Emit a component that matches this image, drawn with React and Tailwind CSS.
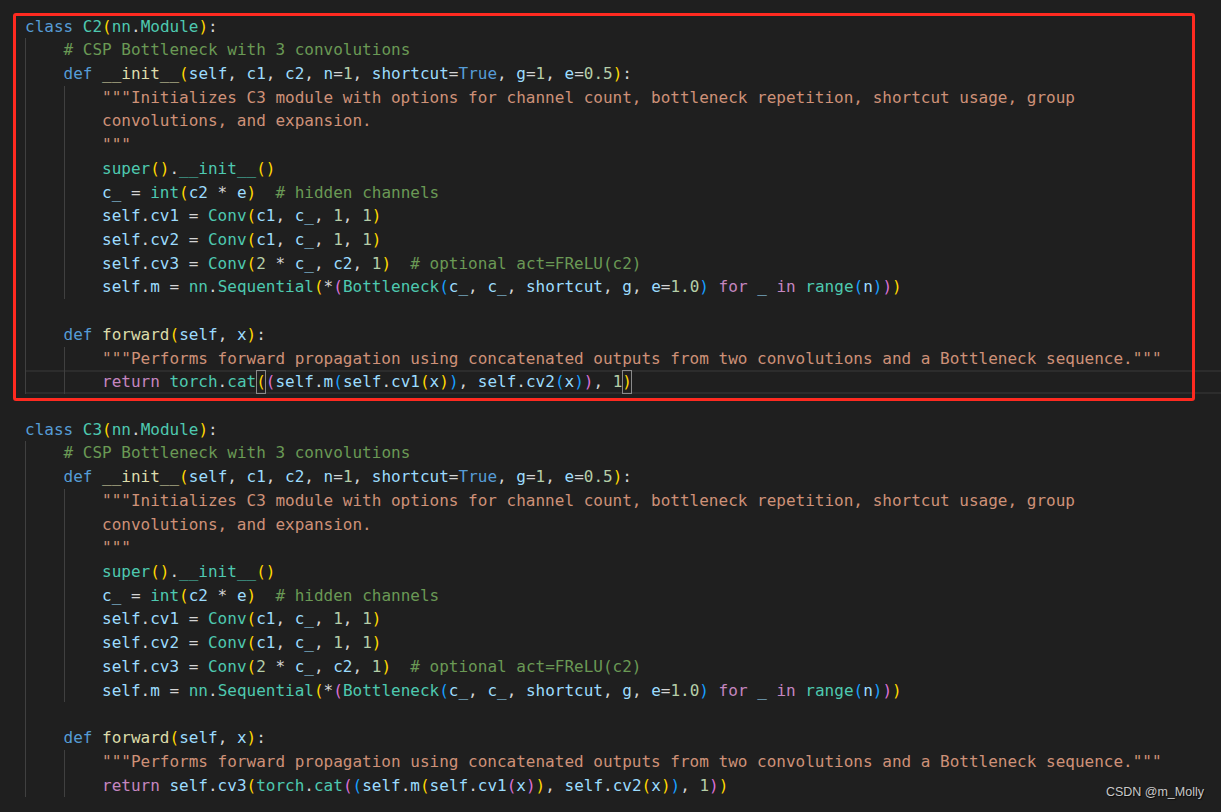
import React from "react";

const C = {
  k: "text-[#569cd6]",
  t: "text-[#4ec9b0]",
  v: "text-[#9cdcfe]",
  f: "text-[#dcdcaa]",
  s: "text-[#ce9178]",
  n: "text-[#b5cea8]",
  c: "text-[#6a9955]",
  p: "text-[#d4d4d4]",
  r: "text-[#c586c0]",
  b1: "text-[#ffd700]",
  b2: "text-[#da70d6]",
  b3: "text-[#179fff]",
};

function Line({ guides = 0, tokens = [], hl = false }) {
  return (
    <div
      className={
        "ml-[25px] flex h-[23.73px] leading-[23.73px] whitespace-pre " +
        (hl ? "shadow-[inset_0_2px_0_#2c2c2c,inset_0_-2px_0_#2c2c2c]" : "")
      }
    >
      {Array.from({ length: guides }).map((_, i) => (
        <span key={"g" + i} className="w-[38.5px] shrink-0 border-l border-[#404040]" />
      ))}
      {tokens.map(([c, text, box], i) => (
        <span
          key={i}
          className={
            C[c] +
            (box ? " outline outline-1 -outline-offset-1 outline-[#8a8a8a]" : "")
          }
        >
          {text}
        </span>
      ))}
    </div>
  );
}

function ClassBlock({ name, last, hl }) {
  const conv = (n) => [
    ["v", "self"], ["p", "."], ["v", n], ["p", " = "], ["t", "Conv"], ["b1", "("],
    ["v", "c1"], ["p", ", "], ["v", "c_"], ["p", ", "], ["n", "1"], ["p", ", "], ["n", "1"], ["b1", ")"],
  ];
  return (
    <>
      <Line tokens={[["k", "class"], ["p", " "], ["t", name], ["b1", "("], ["t", "nn"], ["p", "."], ["t", "Module"], ["b1", ")"], ["p", ":"]]} />
      <Line guides={1} tokens={[["c", "# CSP Bottleneck with 3 convolutions"]]} />
      <Line
        guides={1}
        tokens={[
          ["k", "def"], ["p", " "], ["f", "__init__"], ["b1", "("], ["v", "self"], ["p", ", "], ["v", "c1"], ["p", ", "],
          ["v", "c2"], ["p", ", "], ["v", "n"], ["p", "="], ["n", "1"], ["p", ", "], ["v", "shortcut"], ["p", "="],
          ["k", "True"], ["p", ", "], ["v", "g"], ["p", "="], ["n", "1"], ["p", ", "], ["v", "e"], ["p", "="], ["n", "0.5"],
          ["b1", ")"], ["p", ":"],
        ]}
      />
      <Line guides={2} tokens={[["s", '"""Initializes C3 module with options for channel count, bottleneck repetition, shortcut usage, group']]} />
      <Line guides={2} tokens={[["s", "convolutions, and expansion."]]} />
      <Line guides={2} tokens={[["s", '"""']]} />
      <Line guides={2} tokens={[["t", "super"], ["b1", "()"], ["p", "."], ["t", "__init__"], ["b1", "()"]]} />
      <Line
        guides={2}
        tokens={[
          ["v", "c_"], ["p", " = "], ["t", "int"], ["b1", "("], ["v", "c2"], ["p", " * "], ["v", "e"], ["b1", ")"],
          ["p", "  "], ["c", "# hidden channels"],
        ]}
      />
      <Line guides={2} tokens={conv("cv1")} />
      <Line guides={2} tokens={conv("cv2")} />
      <Line
        guides={2}
        tokens={[
          ["v", "self"], ["p", "."], ["v", "cv3"], ["p", " = "], ["t", "Conv"], ["b1", "("], ["n", "2"], ["p", " * "],
          ["v", "c_"], ["p", ", "], ["v", "c2"], ["p", ", "], ["n", "1"], ["b1", ")"], ["p", "  "],
          ["c", "# optional act=FReLU(c2)"],
        ]}
      />
      <Line
        guides={2}
        tokens={[
          ["v", "self"], ["p", "."], ["v", "m"], ["p", " = "], ["t", "nn"], ["p", "."], ["t", "Sequential"], ["b1", "("],
          ["p", "*"], ["b2", "("], ["t", "Bottleneck"], ["b3", "("], ["v", "c_"], ["p", ", "], ["v", "c_"], ["p", ", "],
          ["v", "shortcut"], ["p", ", "], ["v", "g"], ["p", ", "], ["v", "e"], ["p", "="], ["n", "1.0"], ["b3", ")"],
          ["p", " "], ["r", "for"], ["p", " "], ["v", "_"], ["p", " "], ["r", "in"], ["p", " "], ["t", "range"],
          ["b3", "("], ["v", "n"], ["b3", ")"], ["b2", ")"], ["b1", ")"],
        ]}
      />
      <Line guides={1} />
      <Line guides={1} tokens={[["k", "def"], ["p", " "], ["f", "forward"], ["b1", "("], ["v", "self"], ["p", ", "], ["v", "x"], ["b1", ")"], ["p", ":"]]} />
      <Line
        guides={2}
        tokens={[["s", '"""Performs forward propagation using concatenated outputs from two convolutions and a Bottleneck sequence."""']]}
      />
      <Line guides={2} tokens={last} hl={hl} />
    </>
  );
}

const last1 = [
  ["r", "return"], ["p", " "], ["t", "torch"], ["p", "."], ["t", "cat"], ["b1", "(", true], ["b2", "("],
  ["v", "self"], ["p", "."], ["v", "m"], ["b3", "("], ["v", "self"], ["p", "."], ["v", "cv1"], ["b1", "("], ["v", "x"],
  ["b1", ")"], ["b3", ")"], ["p", ", "], ["v", "self"], ["p", "."], ["v", "cv2"], ["b3", "("], ["v", "x"], ["b3", ")"],
  ["b2", ")"], ["p", ", "], ["n", "1"], ["b1", ")", true],
];

const last2 = [
  ["r", "return"], ["p", " "], ["v", "self"], ["p", "."], ["v", "cv3"], ["b1", "("], ["t", "torch"], ["p", "."],
  ["t", "cat"], ["b2", "("], ["b3", "("], ["v", "self"], ["p", "."], ["v", "m"], ["b1", "("], ["v", "self"], ["p", "."],
  ["v", "cv1"], ["b2", "("], ["v", "x"], ["b2", ")"], ["b1", ")"], ["p", ", "], ["v", "self"], ["p", "."], ["v", "cv2"],
  ["b1", "("], ["v", "x"], ["b1", ")"], ["b3", ")"], ["p", ", "], ["n", "1"], ["b2", ")"], ["b1", ")"],
];

export default function App() {
  return (
    <div className="relative h-[812px] w-full overflow-hidden bg-[#1f1f1f] font-['DejaVu_Sans_Mono','Liberation_Mono',monospace] text-[16px]">
      <div className="pt-[14.5px]">
        <ClassBlock name="C2" last={last1} hl />
        <Line />
        <ClassBlock name="C3" last={last2} />
      </div>

      {/* red annotation rectangle */}
      <div className="pointer-events-none absolute left-[13px] top-[13px] h-[388px] w-[1182px] rounded-[3px] border-[3px] border-[#fe2a20]" />

      {/* watermark */}
      <div className="absolute bottom-[10px] right-[17px] font-['Liberation_Sans',Arial,sans-serif] text-[12.5px] text-[#c8c8c8] [text-shadow:1px_1px_1px_rgba(0,0,0,0.7)]">
        CSDN @m_Molly
      </div>
    </div>
  );
}
